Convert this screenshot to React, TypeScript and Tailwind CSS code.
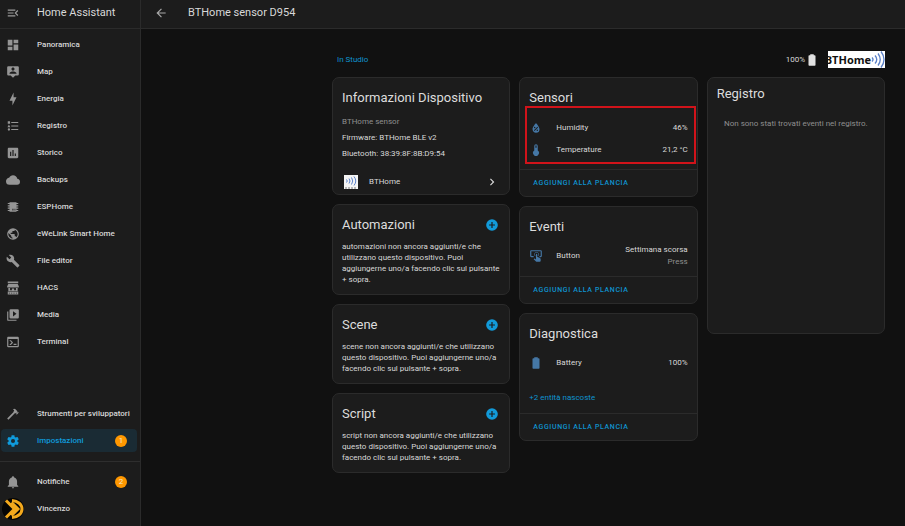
import type { ReactNode } from "react";

const paths = {
  menuOpen:
    "M21,15.61L19.59,17L14.58,12L19.59,7L21,8.39L17.44,12L21,15.61M3,6H16V8H3V6M3,13V11H13V13H3M3,18V16H16V18H3Z",
  dashboard: "M13,3V9H21V3M13,21H21V11H13M3,21H11V15H3M3,13H11V3H3V13Z",
  account:
    "M20,2H4A2,2 0 0,0 2,4V16A2,2 0 0,0 4,18H8L12,22L16,18H20A2,2 0 0,0 22,16V4A2,2 0 0,0 20,2M12,4.3C13.5,4.3 14.7,5.5 14.7,7C14.7,8.5 13.5,9.7 12,9.7C10.5,9.7 9.3,8.5 9.3,7C9.3,5.5 10.5,4.3 12,4.3M18,15H6V14.1C6,12.1 10,11 12,11C14,11 18,12.1 18,14.1V15Z",
  bolt: "M11 15H6L13 1V9H18L11 23V15Z",
  list: "M5,9.5L7.5,14H2.5L5,9.5M3,4H7V8H3V4M5,20A2,2 0 0,0 7,18A2,2 0 0,0 5,16A2,2 0 0,0 3,18A2,2 0 0,0 5,20M9,5V7H21V5H9M9,19H21V17H9V19M9,13H21V11H9V13Z",
  chart:
    "M9 17H7V10H9V17M13 17H11V7H13V17M17 17H15V13H17V17M19 3H5C3.89 3 3 3.89 3 5V19C3 20.1 3.9 21 5 21H19C20.1 21 21 20.1 21 19V5C21 3.89 20.1 3 19 3Z",
  cloud:
    "M19.35,10.03C18.67,6.59 15.64,4 12,4C9.11,4 6.6,5.64 5.35,8.03C2.34,8.36 0,10.9 0,14A6,6 0 0,0 6,20H19A5,5 0 0,0 24,15C24,12.36 21.95,10.22 19.35,10.03Z",
  chip: "M6,4H18V5H21V7H18V9H21V11H18V13H21V15H18V17H21V19H18V20H6V19H3V17H6V15H3V13H6V11H3V9H6V7H3V5H6V4M11,15V18H12V15H11M13,15V18H14V15H13M15,15V18H16V15H15Z",
  earth:
    "M17.9,17.39C17.64,16.59 16.89,16 16,16H15V13A1,1 0 0,0 14,12H8V10H10A1,1 0 0,0 11,9V7H13A2,2 0 0,0 15,5V4.59C17.93,5.77 20,8.64 20,12C20,14.08 19.2,15.97 17.9,17.39M11,19.93C7.05,19.44 4,16.08 4,12C4,11.38 4.08,10.78 4.21,10.21L9,15V16A2,2 0 0,0 11,18M12,2A10,10 0 0,0 2,12A10,10 0 0,0 12,22A10,10 0 0,0 22,12A10,10 0 0,0 12,2Z",
  wrench:
    "M22.7,19L13.6,9.9C14.5,7.6 14,4.9 12.1,3C10.1,1 7.1,0.6 4.7,1.7L9,6L6,9L1.6,4.7C0.4,7.1 0.9,10.1 2.9,12.1C4.8,14 7.5,14.5 9.8,13.6L18.9,22.7C19.3,23.1 19.9,23.1 20.3,22.7L22.6,20.4C23.1,20 23.1,19.3 22.7,19Z",
  store:
    "M3 1H21V4H3ZM4 5H20L22 9V11H2V9ZM4 12H7V16H10V13H14V16H17V12H20V17H4ZM3 18H21V23H3ZM5 20V21.500H6.500V20ZM9 20V21.500H10.500V20ZM13 20V21.500H14.500V20ZM17 20V21.500H18.500V20Z",
  media:
    "M4,6H2V20A2,2 0 0,0 4,22H18V20H4V6M20,2H8A2,2 0 0,0 6,4V16A2,2 0 0,0 8,18H20A2,2 0 0,0 22,16V4A2,2 0 0,0 20,2M12,14.5V5.5L18,10L12,14.5Z",
  console:
    "M20,19V7H4V19H20M20,3A2,2 0 0,1 22,5V19A2,2 0 0,1 20,21H4A2,2 0 0,1 2,19V5C2,3.89 2.9,3 4,3H20M13,17V15H18V17H13M9.58,13L5.57,9H8.4L11.7,12.3C12.09,12.69 12.09,13.33 11.7,13.72L8.42,17H5.59L9.58,13Z",
  hammer:
    "M2,19.63L13.43,8.2L12.72,7.5L14.14,6.07L12,3.89C13.2,2.7 15.09,2.7 16.27,3.89L19.87,7.5L18.45,8.91H21.29L22,9.62L18.45,13.21L17.74,12.5V9.62L16.27,11.04L15.56,10.33L4.13,21.76L2,19.63Z",
  cog: "M12,15.5A3.5,3.5 0 0,1 8.5,12A3.5,3.5 0 0,1 12,8.5A3.5,3.5 0 0,1 15.5,12A3.5,3.5 0 0,1 12,15.5M19.43,12.97C19.47,12.65 19.5,12.33 19.5,12C19.5,11.67 19.47,11.34 19.43,11L21.54,9.37C21.73,9.22 21.78,8.95 21.66,8.73L19.66,5.27C19.54,5.05 19.27,4.96 19.05,5.05L16.56,6.05C16.04,5.66 15.5,5.32 14.87,5.07L14.5,2.42C14.46,2.18 14.25,2 14,2H10C9.75,2 9.54,2.18 9.5,2.42L9.13,5.07C8.5,5.32 7.96,5.66 7.44,6.05L4.95,5.05C4.73,4.96 4.46,5.05 4.34,5.27L2.34,8.73C2.21,8.95 2.27,9.22 2.46,9.37L4.57,11C4.53,11.34 4.5,11.67 4.5,12C4.5,12.33 4.53,12.65 4.57,12.97L2.46,14.63C2.27,14.78 2.21,15.05 2.34,15.27L4.34,18.73C4.46,18.95 4.73,19.03 4.95,18.95L7.44,17.94C7.96,18.34 8.5,18.68 9.13,18.93L9.5,21.58C9.54,21.82 9.75,22 10,22H14C14.25,22 14.46,21.82 14.5,21.58L14.87,18.93C15.5,18.67 16.04,18.34 16.56,17.94L19.05,18.95C19.27,19.03 19.54,18.95 19.66,18.73L21.66,15.27C21.78,15.05 21.73,14.78 21.54,14.63L19.43,12.97Z",
  bell: "M21,19V20H3V19L5,17V11C5,7.9 7.03,5.17 10,4.29C10,4.19 10,4.1 10,4A2,2 0 0,1 12,2A2,2 0 0,1 14,4C14,4.1 14,4.19 14,4.29C16.97,5.17 19,7.9 19,11V17L21,19M14,21A2,2 0 0,1 12,23A2,2 0 0,1 10,21",
  arrowLeft: "M20,11V13H8L13.5,18.5L12.08,19.92L4.16,12L12.08,4.08L13.5,5.5L8,11H20Z",
  battery:
    "M16.67,4H15V2H9V4H7.33A1.33,1.33 0 0,0 6,5.33V20.67C6,21.4 6.6,22 7.33,22H16.67A1.33,1.33 0 0,0 18,20.67V5.33C18,4.6 17.4,4 16.67,4Z",
  thermometer:
    "M15 13V5A3 3 0 0 0 9 5V13A5 5 0 1 0 15 13M12 4A1 1 0 0 1 13 5V8H11V5A1 1 0 0 1 12 4Z",
  humidity:
    "M12,3.25C12,3.25 6,10 6,14C6,17.32 8.69,20 12,20A6,6 0 0,0 18,14C18,10 12,3.25 12,3.25M14.47,9.97L15.53,11.03L9.53,17.03L8.47,15.97M9.75,10A1.25,1.25 0 0,1 11,11.25A1.25,1.25 0 0,1 9.75,12.5A1.25,1.25 0 0,1 8.5,11.25A1.25,1.25 0 0,1 9.75,10M14.25,14.5A1.25,1.25 0 0,1 15.5,15.75A1.25,1.25 0 0,1 14.25,17A1.25,1.25 0 0,1 13,15.75A1.25,1.25 0 0,1 14.25,14.5Z",
  tapButton:
    "M13 5C15.21 5 17 6.79 17 9C17 10.5 16.2 11.77 15 12.46V11.24C15.61 10.69 16 9.89 16 9C16 7.34 14.66 6 13 6S10 7.34 10 9C10 9.89 10.39 10.69 11 11.24V12.46C9.8 11.77 9 10.5 9 9C9 6.79 10.79 5 13 5M20 20.5C19.97 21.32 19.32 21.97 18.5 22H13C12.62 22 12.26 21.85 12 21.57L8 17.37L8.74 16.6C8.93 16.39 9.2 16.28 9.5 16.28H9.7L12 18V9C12 8.45 12.45 8 13 8S14 8.45 14 9V13.47L15.21 13.6L19.15 15.79C19.68 16.03 20 16.56 20 17.14V20.5M20 2H4C2.9 2 2 2.9 2 4V12C2 13.11 2.9 14 4 14H8V12L4 12L4 4H20L20 12H18V14H20V13.99L20.04 14C21.13 14 22 13.11 22 12V4C22 2.9 21.11 2 20 2Z",
  plusCircle:
    "M17,13H13V17H11V13H7V11H11V7H13V11H17M12,2A10,10 0 0,0 2,12A10,10 0 0,0 12,22A10,10 0 0,0 22,12A10,10 0 0,0 12,2Z",
  chevronRight: "M8.59,16.58L13.17,12L8.59,7.41L10,6L16,12L10,18L8.59,16.58Z",
};

type IconName = keyof typeof paths;

function Icon({ name, className = "size-[14px]" }: { name: IconName; className?: string }) {
  return (
    <svg viewBox="0 0 24 24" className={`shrink-0 ${className}`} fill="currentColor" fillRule="evenodd" aria-hidden="true">
      <path d={paths[name]} />
    </svg>
  );
}

const mainNav: { icon: IconName; label: string }[] = [
  { icon: "dashboard", label: "Panoramica" },
  { icon: "account", label: "Map" },
  { icon: "bolt", label: "Energia" },
  { icon: "list", label: "Registro" },
  { icon: "chart", label: "Storico" },
  { icon: "cloud", label: "Backups" },
  { icon: "chip", label: "ESPHome" },
  { icon: "earth", label: "eWeLink Smart Home" },
  { icon: "wrench", label: "File editor" },
  { icon: "store", label: "HACS" },
  { icon: "media", label: "Media" },
  { icon: "console", label: "Terminal" },
];

function NavItem({ icon, label, badge, active }: { icon: IconName; label: string; badge?: number; active?: boolean }) {
  return (
    <a
      href="#"
      className={`flex h-[23px] items-center rounded-sm pr-[10px] pl-[5px] font-medium whitespace-nowrap ${
        active ? "bg-[#1a2b34] text-[#0f9bdc]" : "text-[#d8d8d8]"
      }`}
    >
      <Icon name={icon} className={active ? "size-[14px]" : "size-[14px] text-[#959595]"} />
      <span className="ml-[17px] grow">{label}</span>
      {badge !== undefined && <Badge>{badge}</Badge>}
    </a>
  );
}

function Badge({ children }: { children: ReactNode }) {
  return (
    <span className="flex size-[12px] items-center justify-center rounded-full bg-[#ff9800] font-normal text-[#f4e6cf]">
      {children}
    </span>
  );
}

function UserAvatar() {
  return (
    <svg viewBox="0 0 22 22" className="size-[22px] shrink-0" aria-hidden="true">
      <circle cx="11" cy="11" r="11" fill="#050505" />
      <path d="M10 2.500C16 3 20 6.500 20 11C20 15.500 16 19 10 19.500" fill="none" stroke="#f3a91d" strokeWidth="3" />
      <path d="M4 2.500L12.500 11L4 19.500M9.500 4.500L16 11L9.500 17.500" fill="none" stroke="#f3a91d" strokeWidth="3" />
    </svg>
  );
}

function Sidebar() {
  return (
    <aside className="flex w-[141px] shrink-0 flex-col border-r border-[#2b2b2b] bg-[#1c1c1c]">
      <div className="flex h-[29px] items-center border-b border-[#2b2b2b] pb-[2px] pl-[6px]">
        <button type="button" aria-label="Menu" className="text-[#9b9b9b]">
          <Icon name="menuOpen" />
        </button>
        <span className="ml-[17px] text-[11px] leading-4 text-[#d8d8d8]">Home Assistant</span>
      </div>
      <nav className="flex grow flex-col gap-1 pt-1 pr-[3px] pl-px">
        {mainNav.map((item) => (
          <NavItem key={item.label} {...item} />
        ))}
        <div className="grow" />
        <NavItem icon="hammer" label="Strumenti per sviluppatori" />
        <NavItem icon="cog" label="Impostazioni" badge={1} active />
      </nav>
      <div className="mt-[9px] flex flex-col gap-1 border-t border-[#2e2e2e] pt-[8px] pr-[3px] pb-[6px] pl-px">
        <NavItem icon="bell" label="Notifiche" badge={2} />
        <a href="#" className="flex h-[23px] items-center pl-px font-medium text-[#d8d8d8]">
          <UserAvatar />
          <span className="ml-[13px]">Vincenzo</span>
        </a>
      </div>
    </aside>
  );
}

function Card({ children, className = "" }: { children: ReactNode; className?: string }) {
  return <section className={`rounded-[7px] border border-[#2b2b2b] bg-[#1c1c1c] ${className}`}>{children}</section>;
}

function CardTitle({ children }: { children: ReactNode }) {
  return <h2 className="text-[13px] leading-4 text-[#dcdcdc]">{children}</h2>;
}

function AddCard({ title, text }: { title: string; text: string }) {
  return (
    <Card className="px-[9px] pt-3 pb-[9px]">
      <div className="flex items-center justify-between pr-px">
        <CardTitle>{title}</CardTitle>
        <button type="button" aria-label={`Aggiungi ${title}`} className="text-[#129ad9]">
          <Icon name="plusCircle" />
        </button>
      </div>
      <p className="mt-2 leading-[11px]">{text}</p>
    </Card>
  );
}

function EntityRow({ icon, name, children }: { icon: IconName; name: string; children: ReactNode }) {
  return (
    <div className="flex h-[22px] items-center">
      <Icon name={icon} className="size-[14px] text-[#4577a5]" />
      <span className="ml-[13px] grow">{name}</span>
      <span className="text-right leading-3">{children}</span>
    </div>
  );
}

function AddToDashboard() {
  return (
    <div className="flex h-[27px] items-center border-t border-[#2b2b2b] pl-[13px]">
      <button type="button" className="text-[7px] font-medium tracking-[0.09em] text-[#0f93cf] uppercase">
        Aggiungi alla plancia
      </button>
    </div>
  );
}

function BrandLogo() {
  return (
    <div className="flex h-[17px] w-[57px] items-center justify-end bg-white">
      <span className="font-['Open_Sans',sans-serif] text-[11px] leading-[17px] font-bold text-[#111]">BTHome</span>
      <svg viewBox="0 0 14 17" className="h-[17px] w-[14px] shrink-0" fill="none" stroke="#5a80c8" strokeWidth="1.300" aria-hidden="true">
        <path d="M1 6.500Q3 8.500 1 10.500M4 4.500Q7.500 8.500 4 12.500M7 2.500Q11.500 8.500 7 14.500M10 0.500Q16 8.500 10 16.500" />
      </svg>
    </div>
  );
}

function BrandIcon() {
  return (
    <svg viewBox="0 0 14 14" className="size-[14px] shrink-0" aria-hidden="true">
      <rect width="14" height="14" fill="#f4f4f4" />
      <path
        d="M2.500 4.500Q4 6 2.500 7.500M5 3.500Q7 6 5 8.500M7.500 2.500Q10 6 7.500 9.500M10 1.500Q13.500 6 10 10.500"
        fill="none"
        stroke="#5a80c8"
        strokeWidth="1"
      />
      <path d="M1 13H12" stroke="#777" strokeWidth="1" strokeDasharray="2 1" />
    </svg>
  );
}

export default function App() {
  return (
    <div className="flex min-h-screen bg-[#111111] font-[Roboto,sans-serif] text-[8px] leading-3 text-[#d8d8d8]">
      <Sidebar />
      <div className="flex grow flex-col">
        <header className="flex h-[29px] items-center border-b border-[#2b2b2b] bg-[#1c1c1c] pb-[2px] pl-[13px]">
          <button type="button" aria-label="Indietro" className="text-[#a8a8a8]">
            <Icon name="arrowLeft" />
          </button>
          <h1 className="ml-5 text-[11px] leading-4">BTHome sensor D954</h1>
        </header>
        <main className="pt-[22px] pr-5 pl-[25%]">
          <div className="flex h-[17px] items-center justify-between pl-[5px]">
            <a href="#" className="text-[#0f93cf]">
              In Studio
            </a>
            <div className="flex items-center">
              <span>100%</span>
              <Icon name="battery" className="size-[14px] text-[#e1e1e1]" />
              <div className="ml-[9px]">
                <BrandLogo />
              </div>
            </div>
          </div>
          <div className="mt-[9px] grid grid-cols-3 items-start gap-[9px]">
            <div className="flex flex-col gap-[9px]">
              <Card className="px-[9px] pt-3 pb-px">
                <CardTitle>Informazioni Dispositivo</CardTitle>
                <div className="mt-2 leading-4">
                  <p className="text-[#8f8f8f]">BTHome sensor</p>
                  <p>Firmware: BTHome BLE v2</p>
                  <p>Bluetooth: 38:39:8F:8B:D9:54</p>
                </div>
                <a href="#" className="mt-[9px] flex h-[22px] items-center pr-px pl-[2px]">
                  <BrandIcon />
                  <span className="ml-[11px] grow">BTHome</span>
                  <Icon name="chevronRight" />
                </a>
              </Card>
              <AddCard
                title="Automazioni"
                text="automazioni non ancora aggiunti/e che utilizzano questo dispositivo. Puoi aggiungerne uno/a facendo clic sul pulsante + sopra."
              />
              <AddCard
                title="Scene"
                text="scene non ancora aggiunti/e che utilizzano questo dispositivo. Puoi aggiungerne uno/a facendo clic sul pulsante + sopra."
              />
              <AddCard
                title="Script"
                text="script non ancora aggiunti/e che utilizzano questo dispositivo. Puoi aggiungerne uno/a facendo clic sul pulsante + sopra."
              />
            </div>
            <div className="flex flex-col gap-[9px]">
              <Card>
                <div className="px-[9px] pt-3">
                  <CardTitle>Sensori</CardTitle>
                </div>
                <div className="relative px-[9px] pt-[11px] pb-2">
                  <EntityRow icon="humidity" name="Humidity">
                    46%
                  </EntityRow>
                  <EntityRow icon="thermometer" name="Temperature">
                    21,2 °C
                  </EntityRow>
                  <div className="absolute top-0 right-px bottom-[5px] left-[5px] border-2 border-[#d0131a]" />
                </div>
                <AddToDashboard />
              </Card>
              <Card>
                <div className="px-[9px] pt-3 pb-[9px]">
                  <CardTitle>Eventi</CardTitle>
                  <div className="mt-[10px]">
                    <EntityRow icon="tapButton" name="Button">
                      Settimana scorsa
                      <br />
                      <span className="text-[#8f8f8f]">Press</span>
                    </EntityRow>
                  </div>
                </div>
                <AddToDashboard />
              </Card>
              <Card>
                <div className="px-[9px] pt-3 pb-[9px]">
                  <CardTitle>Diagnostica</CardTitle>
                  <div className="mt-[10px]">
                    <EntityRow icon="battery" name="Battery">
                      100%
                    </EntityRow>
                  </div>
                  <button type="button" className="mt-[18px] block text-[#0f93cf]">
                    +2 entità nascoste
                  </button>
                </div>
                <AddToDashboard />
              </Card>
            </div>
            <Card className="min-h-[257px] px-[9px] pt-2">
              <CardTitle>Registro</CardTitle>
              <p className="mt-4 text-center text-[#8f8f8f]">Non sono stati trovati eventi nel registro.</p>
            </Card>
          </div>
        </main>
      </div>
    </div>
  );
}
